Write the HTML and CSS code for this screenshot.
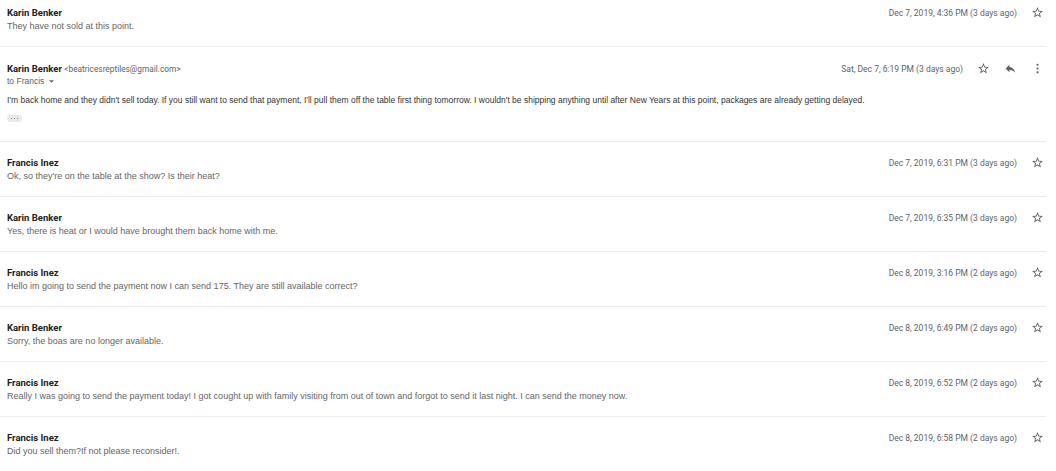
FILE: index.html
```html
<!DOCTYPE html>
<html>
<head>
<meta charset="utf-8">
<link rel="stylesheet" href="styles.css">
</head>
<body>
<div class="thread">
  <div class="msg msg-first">
    <div class="head">
      <span class="name">Karin Benker</span>
      <span class="meta"><span class="date">Dec 7, 2019, 4:36 PM (3 days ago)</span><span class="icon"><svg viewBox="0 0 24 24"><path d="M22 9.24l-7.19-.62L12 2 9.19 8.63 2 9.24l5.46 4.73L5.82 21 12 17.27 18.18 21l-1.63-7.03L22 9.24zM12 15.4l-3.76 2.27 1-4.28-3.32-2.88 4.38-.38L12 6.1l1.71 4.04 4.38.38-3.32 2.88 1 4.28L12 15.4z"/></svg></span></span>
    </div>
    <div class="snippet">They have not sold at this point.</div>
  </div>

  <div class="msg msg-open">
    <div class="head">
      <span class="name">Karin Benker <span class="addr">&lt;beatricesreptiles@gmail.com&gt;</span></span>
      <span class="meta"><span class="date">Sat, Dec 7, 6:19 PM (3 days ago)</span><span class="icon"><svg viewBox="0 0 24 24"><path d="M22 9.24l-7.19-.62L12 2 9.19 8.63 2 9.24l5.46 4.73L5.82 21 12 17.27 18.18 21l-1.63-7.03L22 9.24zM12 15.4l-3.76 2.27 1-4.28-3.32-2.88 4.38-.38L12 6.1l1.71 4.04 4.38.38-3.32 2.88 1 4.28L12 15.4z"/></svg></span><span class="icon"><svg viewBox="0 0 24 24"><path d="M10 9V5l-7 7 7 7v-4.1c5 0 8.5 1.6 11 5.1-1-5-4-10-11-11z"/></svg></span><span class="icon"><svg viewBox="0 0 24 24"><circle cx="12" cy="5" r="2"/><circle cx="12" cy="12" r="2"/><circle cx="12" cy="19" r="2"/></svg></span></span>
    </div>
    <div class="to">to Francis <svg class="caret" viewBox="0 0 10 5"><path d="M0 0h10L5 5z"/></svg></div>
    <div class="body">I'm back home and they didn't sell today. If you still want to send that payment, I'll pull them off the table first thing tomorrow. I wouldn't be shipping anything until after New Years at this point, packages are already getting delayed.</div>
    <div class="more"><span></span><span></span><span></span></div>
  </div>

  <div class="msg">
    <div class="head">
      <span class="name">Francis Inez</span>
      <span class="meta"><span class="date">Dec 7, 2019, 6:31 PM (3 days ago)</span><span class="icon"><svg viewBox="0 0 24 24"><path d="M22 9.24l-7.19-.62L12 2 9.19 8.63 2 9.24l5.46 4.73L5.82 21 12 17.27 18.18 21l-1.63-7.03L22 9.24zM12 15.4l-3.76 2.27 1-4.28-3.32-2.88 4.38-.38L12 6.1l1.71 4.04 4.38.38-3.32 2.88 1 4.28L12 15.4z"/></svg></span></span>
    </div>
    <div class="snippet">Ok, so they're on the table at the show? Is their heat?</div>
  </div>

  <div class="msg">
    <div class="head">
      <span class="name">Karin Benker</span>
      <span class="meta"><span class="date">Dec 7, 2019, 6:35 PM (3 days ago)</span><span class="icon"><svg viewBox="0 0 24 24"><path d="M22 9.24l-7.19-.62L12 2 9.19 8.63 2 9.24l5.46 4.73L5.82 21 12 17.27 18.18 21l-1.63-7.03L22 9.24zM12 15.4l-3.76 2.27 1-4.28-3.32-2.88 4.38-.38L12 6.1l1.71 4.04 4.38.38-3.32 2.88 1 4.28L12 15.4z"/></svg></span></span>
    </div>
    <div class="snippet">Yes, there is heat or I would have brought them back home with me.</div>
  </div>

  <div class="msg">
    <div class="head">
      <span class="name">Francis Inez</span>
      <span class="meta"><span class="date">Dec 8, 2019, 3:16 PM (2 days ago)</span><span class="icon"><svg viewBox="0 0 24 24"><path d="M22 9.24l-7.19-.62L12 2 9.19 8.63 2 9.24l5.46 4.73L5.82 21 12 17.27 18.18 21l-1.63-7.03L22 9.24zM12 15.4l-3.76 2.27 1-4.28-3.32-2.88 4.38-.38L12 6.1l1.71 4.04 4.38.38-3.32 2.88 1 4.28L12 15.4z"/></svg></span></span>
    </div>
    <div class="snippet">Hello im going to send the payment now I can send 175. They are still available correct?</div>
  </div>

  <div class="msg">
    <div class="head">
      <span class="name">Karin Benker</span>
      <span class="meta"><span class="date">Dec 8, 2019, 6:49 PM (2 days ago)</span><span class="icon"><svg viewBox="0 0 24 24"><path d="M22 9.24l-7.19-.62L12 2 9.19 8.63 2 9.24l5.46 4.73L5.82 21 12 17.27 18.18 21l-1.63-7.03L22 9.24zM12 15.4l-3.76 2.27 1-4.28-3.32-2.88 4.38-.38L12 6.1l1.71 4.04 4.38.38-3.32 2.88 1 4.28L12 15.4z"/></svg></span></span>
    </div>
    <div class="snippet">Sorry, the boas are no longer available.</div>
  </div>

  <div class="msg">
    <div class="head">
      <span class="name">Francis Inez</span>
      <span class="meta"><span class="date">Dec 8, 2019, 6:52 PM (2 days ago)</span><span class="icon"><svg viewBox="0 0 24 24"><path d="M22 9.24l-7.19-.62L12 2 9.19 8.63 2 9.24l5.46 4.73L5.82 21 12 17.27 18.18 21l-1.63-7.03L22 9.24zM12 15.4l-3.76 2.27 1-4.28-3.32-2.88 4.38-.38L12 6.1l1.71 4.04 4.38.38-3.32 2.88 1 4.28L12 15.4z"/></svg></span></span>
    </div>
    <div class="snippet">Really I was going to send the payment today! I got cought up with family visiting from out of town and forgot to send it last night. I can send the money now.</div>
  </div>

  <div class="msg msg-last">
    <div class="head">
      <span class="name">Francis Inez</span>
      <span class="meta"><span class="date">Dec 8, 2019, 6:58 PM (2 days ago)</span><span class="icon"><svg viewBox="0 0 24 24"><path d="M22 9.24l-7.19-.62L12 2 9.19 8.63 2 9.24l5.46 4.73L5.82 21 12 17.27 18.18 21l-1.63-7.03L22 9.24zM12 15.4l-3.76 2.27 1-4.28-3.32-2.88 4.38-.38L12 6.1l1.71 4.04 4.38.38-3.32 2.88 1 4.28L12 15.4z"/></svg></span></span>
    </div>
    <div class="snippet">Did you sell them?If not please reconsider!.</div>
  </div>
</div>
</body>
</html>
```

FILE: styles.css
```css
html, body {
  margin: 0;
  padding: 0;
  background: #fff;
}

.thread {
  width: 1046px;
  font-family: "Liberation Sans", Arial, sans-serif;
}

.msg {
  padding: 14px 0 12px 7px;
  border-bottom: 1px solid #ececec;
}

.msg-first {
  padding-top: 6px;
}

.msg-last {
  border-bottom: none;
}

.head {
  display: flex;
  justify-content: space-between;
  align-items: center;
  height: 13px;
}

.name {
  font-family: Roboto, "Liberation Sans", sans-serif;
  font-weight: 700;
  font-size: 9.5px;
  color: #222;
  line-height: 13px;
  white-space: nowrap;
}

.addr {
  font-weight: 400;
  font-size: 8.3px;
  color: #5f6368;
}

.meta {
  display: flex;
  align-items: center;
  gap: 9px;
  font-family: Roboto, "Liberation Sans", sans-serif;
  font-size: 8.5px;
  color: #5f6368;
}

.date {
  margin-right: 2px;
}

.icon {
  width: 18px;
  height: 13px;
  display: flex;
  align-items: center;
  justify-content: center;
}

.icon svg {
  width: 13px;
  height: 13px;
  fill: #5f6368;
}

.snippet {
  font-size: 9px;
  line-height: 15px;
  color: #666;
}

.msg-open {
  padding-top: 15px;
  padding-bottom: 19px;
}

.to {
  font-size: 8.5px;
  line-height: 12px;
  color: #5f6368;
  display: flex;
  align-items: center;
  gap: 5px;
}

.caret {
  width: 5px;
  height: 3px;
  fill: #5f6368;
}

.body {
  margin-top: 6px;
  font-size: 8.5px;
  line-height: 15px;
  color: #333;
}

.more {
  margin-top: 7px;
  width: 15px;
  height: 7px;
  border-radius: 4px;
  background: #e8eaed;
  display: flex;
  align-items: center;
  justify-content: center;
  gap: 1.5px;
}

.more span {
  width: 1.5px;
  height: 1.5px;
  border-radius: 50%;
  background: #5f6368;
}
```
